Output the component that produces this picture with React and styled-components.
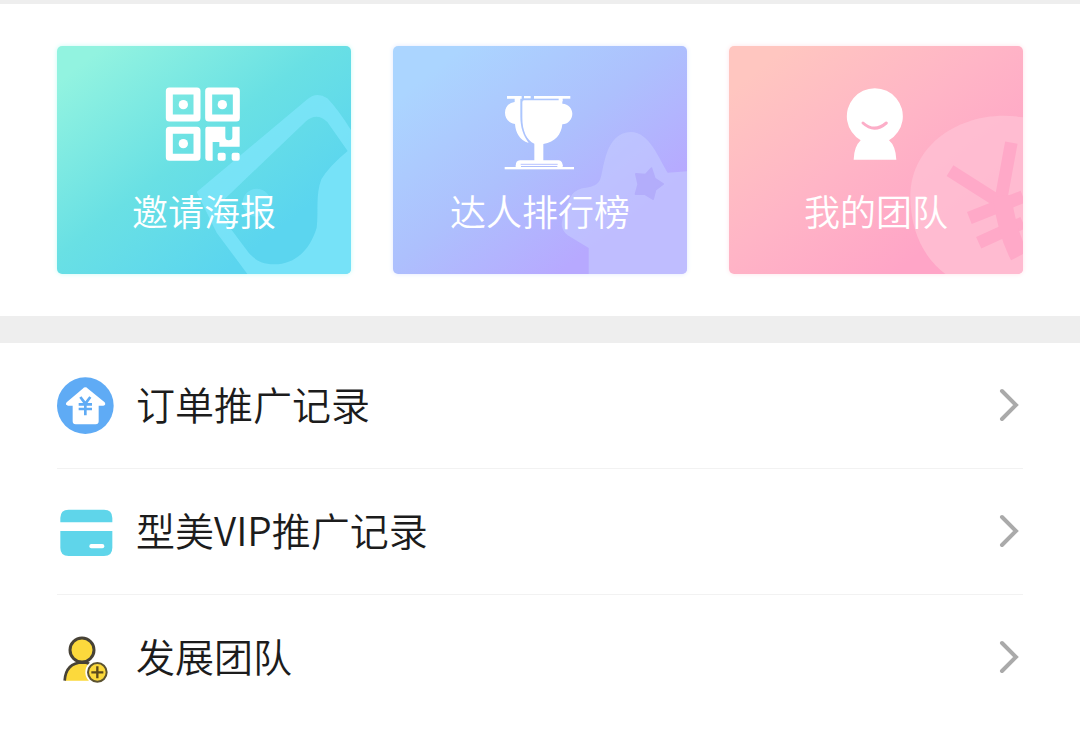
import styled, { createGlobalStyle } from "styled-components";

const GlobalStyle = createGlobalStyle`
  * {
    box-sizing: border-box;
  }

  body {
    margin: 0;
    background-color: #fff;
    font-family: "Noto Sans CJK SC", sans-serif;
    font-weight: 350;
  }
`;

const Page = styled.main`
  border-top: 4px solid #eee;
`;

const Cards = styled.nav`
  display: grid;
  grid-template-columns: repeat(3, 1fr);
  gap: 42px;
  padding: 42px 57px;
  border-bottom: 27px solid #eee;
`;

const CardButton = styled.button`
  position: relative;
  display: flex;
  flex-direction: column;
  align-items: center;
  gap: 18px;
  padding: 40px 0 42px;
  border: 0;
  border-radius: 5px;
  overflow: hidden;
  background: ${(props) => props.$background};
  box-shadow: 0 0 5px ${(props) => props.$glow};
  color: #fff;
  font-family: inherit;
  cursor: pointer;
`;

const CardIcon = styled.svg`
  position: relative;
  width: 84px;
  height: 84px;
`;

const CardLabel = styled.span`
  position: relative;
  font-size: 36px;
  font-weight: 350;
  line-height: 44px;
`;

const Decoration = styled.svg`
  position: absolute;
  right: 0;
  bottom: 0;
  height: 100%;
`;

const List = styled.ul`
  margin: 0;
  padding: 0 57px;
  list-style: none;
`;

const Item = styled.li`
  & + & {
    border-top: 1px solid #f2f2f2;
  }
`;

const ItemLink = styled.a`
  display: flex;
  align-items: center;
  gap: 22px;
  height: 125px;
  color: #1c1c1c;
  text-decoration: none;
`;

const ItemIcon = styled.svg`
  width: 57px;
  height: 57px;
  flex-shrink: 0;
`;

const ItemLabel = styled.span`
  flex: 1;
  padding-bottom: 6px;
  font-size: 39px;
  line-height: 56px;
`;

const Arrow = styled.svg`
  width: 24px;
  height: 36px;
  flex-shrink: 0;
`;

const PosterDecoration = () => (
  <Decoration viewBox="21 30 882 684" aria-hidden="true">
    <path
      d="M440 468 L772 190 Q800 165 832 187 Q860 215 903 282 V714 H592 L500 590 Z
        M500 512 L768 256 Q800 228 832 258 L893 345 Q838 390 814 430 C796 480 806 520 800 575 C780 640 738 685 672 685 C630 684 612 668 596 650 L536 570 Z"
      fill="#7fe5fb"
      fillOpacity="0.75"
      fillRule="evenodd"
    />
    <circle cx="620" cy="500" r="42" fill="#7fe5fb" fillOpacity="0.5" />
  </Decoration>
);

const RankDecoration = () => (
  <Decoration viewBox="21 30 882 684" aria-hidden="true">
    <path
      d="M642 432 C655 400 655 290 735 288 C790 288 820 370 845 410 L903 406 V714 H608 V636 L545 598 Q515 575 535 535 C550 480 560 460 600 455 Q632 452 642 432 Z"
      fill="#c4cbff"
      fillOpacity="0.6"
    />
    <path
      d="M796 397 L806 428 L831 444 L808 461 L801 489 L776 474 L749 474 L757 445 L750 414 L779 416 Z"
      fill="#b3adfb"
      stroke="#b3adfb"
      strokeWidth="6"
      strokeLinejoin="round"
    />
  </Decoration>
);

const TeamDecoration = () => (
  <Decoration viewBox="21 30 882 684" aria-hidden="true">
    <path
      d="M903 244 C730 215 565 320 565 480 C565 590 610 670 670 714 H903 Z"
      fill="#ffc0d3"
      fillOpacity="0.8"
    />
    <g fill="none" stroke="#ffa9c8" strokeWidth="38">
      <path d="M684 404 L835 500 L868 320" />
      <path d="M742 546 L903 482 M770 620 L903 560" />
      <path d="M840 480 Q855 590 892 660" strokeWidth="56" />
    </g>
  </Decoration>
);

const PosterIcon = () => (
  <CardIcon viewBox="336 150 252 252" aria-hidden="true">
    <g fill="none" stroke="#fff" strokeWidth="21" strokeLinejoin="round">
      <path d="M358 165 H441 V246 H358 Z" />
      <path d="M476 165 H559 V246 H476 Z" />
      <path d="M358 283 H441 V364 H358 Z" />
    </g>
    <g fill="#fff">
      <circle cx="400" cy="206" r="14" />
      <circle cx="517" cy="206" r="14" />
      <circle cx="400" cy="323" r="14" />
      <path d="M472 272 H526 V303 Q526 313 536 313 Q547 313 547 303 V272 H569 V332 H508 V318 H488 V374 H473 Q466 374 466 367 V279 Q466 272 472 272 Z" />
      <rect x="503" y="350" width="24" height="24" rx="6" />
      <rect x="545" y="350" width="24" height="24" rx="6" />
    </g>
  </CardIcon>
);

const TrophyIcon = () => (
  <CardIcon viewBox="336 150 252 252" aria-hidden="true">
    <g fill="#fff">
      <path d="M363 180 H407 V188 H403 V240 C403 275 412 298 428 321 C400 312 389 290 387 264 C366 260 357 246 357 230 C357 212 370 200 386 198 V188 H363 Z" />
      <path d="M414 193 H529 V203 C548 204 559 218 559 233 C559 250 546 264 529 265 C526 295 508 319 472 324 V373 H518 Q530 375 530 390 H390 Q388 374 402 373 H445 V323 C422 312 409 285 409 245 V199 Q409 193 414 193 Z" />
      <rect x="414" y="180" width="20" height="7" />
      <rect x="444" y="180" width="109" height="8" />
      <rect x="518" y="186" width="12" height="10" />
      <rect x="356" y="393" width="208" height="7" />
      <rect x="389" y="386" width="16" height="10" />
      <rect x="514" y="386" width="16" height="10" />
    </g>
    <path d="M404 385 H515" stroke="#c5ceff" strokeWidth="4" />
  </CardIcon>
);

const MemberIcon = () => (
  <CardIcon viewBox="336 150 252 252" aria-hidden="true">
    <path
      d="M416 313 A84 84 0 1 1 501 313 Q521 330 523 371 H395 Q396 332 416 313 Z"
      fill="#fff"
    />
    <path
      d="M423 261 Q457 292 493 261"
      fill="none"
      stroke="#fcaec8"
      strokeWidth="9"
      strokeLinecap="round"
    />
  </CardIcon>
);

const OrderIcon = () => (
  <ItemIcon viewBox="21 23 171 171" aria-hidden="true">
    <circle cx="106" cy="109" r="85" fill="#5fabf5" />
    <path
      d="M98 58 Q106 50 114 58 L164 99 Q169 108 160 109 H146 V156 Q146 165 137 165 H77 Q68 165 68 156 V109 H54 Q44 107 50 99 Z"
      fill="#fff"
    />
    <path
      d="M91 83 L106 103 L121 83 M106 103 V138 M86 105 H126 M86 119 H126"
      fill="none"
      stroke="#5fabf5"
      strokeWidth="8"
    />
  </ItemIcon>
);

const VipIcon = () => (
  <ItemIcon viewBox="21 23 171 171" aria-hidden="true">
    <g fill="#5fd5ea">
      <path d="M31 81 V68 Q31 43 56 43 H162 Q187 43 187 68 V81 Z" />
      <path d="M31 107 H187 V157 Q187 182 162 182 H56 Q31 182 31 157 Z" />
    </g>
    <rect x="118" y="146" width="45" height="13" rx="6" fill="#fff" />
  </ItemIcon>
);

const GrowIcon = () => (
  <ItemIcon viewBox="21 26 171 171" aria-hidden="true">
    <path
      d="M45 181 C46 145 66 126 98 126 Q112 126 122 132 L112 160 L118 181 Z"
      fill="#fcd93c"
    />
    <path
      d="M44 181 C46 148 63 127 98 126 Q108 126 118 130"
      fill="none"
      stroke="#474236"
      strokeWidth="8"
    />
    <circle cx="96" cy="89" r="36" fill="#fcd93c" stroke="#474236" strokeWidth="9" />
    <circle cx="142" cy="156" r="36" fill="#fff" />
    <circle cx="142" cy="156" r="28" fill="#fcd93c" stroke="#5c5331" strokeWidth="6" />
    <path d="M142 138 V174 M124 156 H160" stroke="#5c4a1c" strokeWidth="7" />
  </ItemIcon>
);

const cards = [
  {
    label: "邀请海报",
    background: "linear-gradient(142deg, #92f3e0 8%, #69e0e4 46%, #5bd5ef 78%)",
    glow: "#c9fbf5",
    Icon: PosterIcon,
    Art: PosterDecoration,
  },
  {
    label: "达人排行榜",
    background: "linear-gradient(142deg, #abd5ff 12%, #adc0fd 48%, #b7a9ff 78%)",
    glow: "#e0e8ff",
    Icon: TrophyIcon,
    Art: RankDecoration,
  },
  {
    label: "我的团队",
    background: "linear-gradient(142deg, #ffc6c0 10%, #ffb5c6 45%, #ffa5c7 78%)",
    glow: "#ffe3e9",
    Icon: MemberIcon,
    Art: TeamDecoration,
  },
];

const items = [
  { label: "订单推广记录", Icon: OrderIcon },
  { label: "型美VIP推广记录", Icon: VipIcon },
  { label: "发展团队", Icon: GrowIcon },
];

const App = () => {
  return (
    <>
      <GlobalStyle />
      <Page>
        <Cards>
          {cards.map(({ label, background, glow, Icon, Art }) => (
            <CardButton key={label} type="button" $background={background} $glow={glow}>
              <Art />
              <Icon />
              <CardLabel>{label}</CardLabel>
            </CardButton>
          ))}
        </Cards>
        <List>
          {items.map(({ label, Icon }) => (
            <Item key={label}>
              <ItemLink href="#">
                <Icon />
                <ItemLabel>{label}</ItemLabel>
                <Arrow viewBox="0 0 24 36" aria-hidden="true">
                  <path
                    d="M3 3 L17 17 L3 31"
                    fill="none"
                    stroke="#aaa"
                    strokeWidth="4"
                    strokeLinecap="round"
                  />
                </Arrow>
              </ItemLink>
            </Item>
          ))}
        </List>
      </Page>
    </>
  );
};

export default App;
